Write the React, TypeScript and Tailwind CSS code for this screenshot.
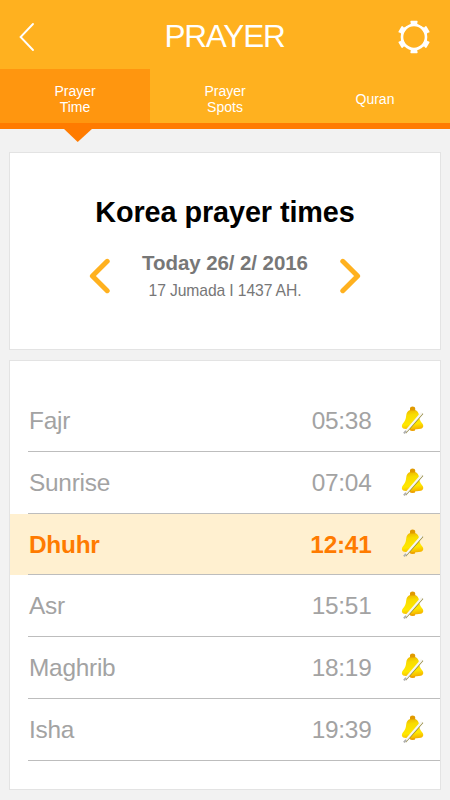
const tabs = [
  { lines: ["Prayer", "Time"], active: true },
  { lines: ["Prayer", "Spots"], active: false },
  { lines: ["Quran"], active: false },
];

const prayers = [
  { name: "Fajr", time: "05:38" },
  { name: "Sunrise", time: "07:04" },
  { name: "Dhuhr", time: "12:41", current: true },
  { name: "Asr", time: "15:51" },
  { name: "Maghrib", time: "18:19" },
  { name: "Isha", time: "19:39" },
];

function BackIcon() {
  return (
    <svg width="16" height="30" viewBox="0 0 16 30" fill="none">
      <path d="M14 2 1.600 15 14 28" stroke="#fff" strokeWidth="1.9" strokeLinecap="round" />
    </svg>
  );
}

function GearIcon() {
  return (
    <svg width="32" height="34" viewBox="-16 -17 32 34">
      <circle r="12" fill="none" stroke="#fff" strokeWidth="2.600" />
      {[0, 60, 120, 180, 240, 300].map((angle) => (
        <path
          key={angle}
          d="M-2.900-16.200H2.900Q3.800-16.200 3.600-15.200L3.200-13.600C3.600-12.600 4.600-12.100 6-11.600L5-11H-5L-6-11.600C-4.600-12.100-3.600-12.600-3.200-13.600L-3.600-15.200Q-3.800-16.200-2.900-16.200Z"
          fill="#fff"
          transform={`rotate(${angle})`}
        />
      ))}
    </svg>
  );
}

function DayArrow({ next = false }: { next?: boolean }) {
  return (
    <svg width="22" height="36" viewBox="0 0 22 36" fill="none" className={next ? "rotate-180" : ""}>
      <path d="M18.200 3.300 3.400 18l14.800 14.700" stroke="#ffb11f" strokeWidth="5" strokeLinecap="round" strokeLinejoin="round" />
    </svg>
  );
}

function MutedBell() {
  return (
    <svg width="26" height="30" viewBox="0 0 26 30" className="mt-px shrink-0">
      <defs>
        <linearGradient id="bell" x1="0.4" y1="0" x2="0.55" y2="1">
          <stop offset="0" stopColor="#eeb800" />
          <stop offset="0.25" stopColor="#f8dc00" />
          <stop offset="0.72" stopColor="#ffe800" />
          <stop offset="1" stopColor="#f5b400" />
        </linearGradient>
      </defs>
      <ellipse cx="12.600" cy="23.400" rx="2.800" ry="1.600" fill="#eda000" />
      <path
        d="M10.100 4Q6.600 5.300 6.200 9.500C5.900 13.300 5 15.200 2.900 17.600C1.300 19.600 1.500 22.300 4.200 22.800C9 23.500 16 23.500 20.800 22.800C23.500 22.300 23.900 19.600 22.300 17.600C20.200 15.200 19.300 13.300 19 9.500Q18.600 5.300 15.100 4Z"
        fill="url(#bell)"
      />
      <path d="M10 4.600V2.300Q10 .4 12.600.4T15.200 2.300V4.600Z" fill="#e09a00" />
      <path d="M5.600 27 22.800 7.500" stroke="#8f8436" strokeWidth="1.300" />
      <path d="M4.400 26.900 21.900 6.800" stroke="#f7f6f2" strokeWidth="2.200" />
      <path d="m3.900 27.400 2.200-2.500" stroke="#b0b0b0" strokeWidth="2" />
    </svg>
  );
}

export default function App() {
  return (
    <div className="flex h-[800px] w-[450px] flex-col overflow-hidden bg-[#f2f2f2] font-['Liberation_Sans',Arial,sans-serif]">
      <header className="bg-[#ffb11f] text-white">
        <div className="flex h-[69px] items-center justify-between pt-[5px] pr-5 pl-[19px]">
          <button type="button" className="w-8" aria-label="Back">
            <BackIcon />
          </button>
          <h1 className="text-[31.500px] leading-none tracking-[-1.200px]">PRAYER</h1>
          <button type="button" aria-label="Settings">
            <GearIcon />
          </button>
        </div>
        <nav className="grid h-[60px] grid-cols-3 border-b-[6px] border-[#ff7b00]">
          {tabs.map(({ lines, active }) => (
            <button
              key={lines.join(" ")}
              type="button"
              className={`relative flex flex-col items-center justify-center pt-1.5 text-sm leading-4 ${active ? "bg-[#ff960f]" : ""}`}
            >
              {lines.map((line) => (
                <span key={line}>{line}</span>
              ))}
              {active && (
                <svg width="30" height="14" viewBox="0 0 30 14" className="absolute -bottom-[19px] left-[63px]">
                  <path d="M0 0h30L14.700 14Z" fill="#ff7b00" />
                </svg>
              )}
            </button>
          ))}
        </nav>
      </header>

      <main className="flex flex-1 flex-col gap-2.5 px-[9px] pt-[23px] pb-2.5">
        <section className="h-[198px] border border-[#e3e3e3] bg-white pt-[43px] text-center">
          <h2 className="text-[28.800px] leading-8 font-bold tracking-[-0.080px] text-black">Korea prayer times</h2>
          <div className="mt-[23px] flex items-center justify-center gap-[31px]">
            <button type="button" aria-label="Previous day">
              <DayArrow />
            </button>
            <div>
              <p className="text-[20.500px] leading-6 font-bold tracking-[-0.080px] text-[#777]">Today 26/ 2/ 2016</p>
              <p className="mt-1.5 text-[15.700px] leading-5 tracking-[-0.120px] text-[#777]">17 Jumada I 1437 AH.</p>
            </div>
            <button type="button" aria-label="Next day">
              <DayArrow next />
            </button>
          </div>
        </section>

        <section className="flex-1 border border-[#e3e3e3] bg-white pt-[29px]">
          {prayers.map(({ name, time, current }) => (
            <div key={name} className={`h-[61.800px] pl-[18px] ${current ? "bg-[#fff0d0]" : ""}`}>
              <div
                className={`flex h-full items-center border-b border-[#bdbdbd] pr-[14.500px] text-[24.400px] tracking-[-0.250px] ${current ? "font-bold text-[#ff7b00]" : "text-[#a3a3a3]"}`}
              >
                <span className="flex-1 pt-0.5 pl-px">{name}</span>
                <span className="mr-7 pt-0.5">{time}</span>
                <MutedBell />
              </div>
            </div>
          ))}
        </section>
      </main>
    </div>
  );
}
